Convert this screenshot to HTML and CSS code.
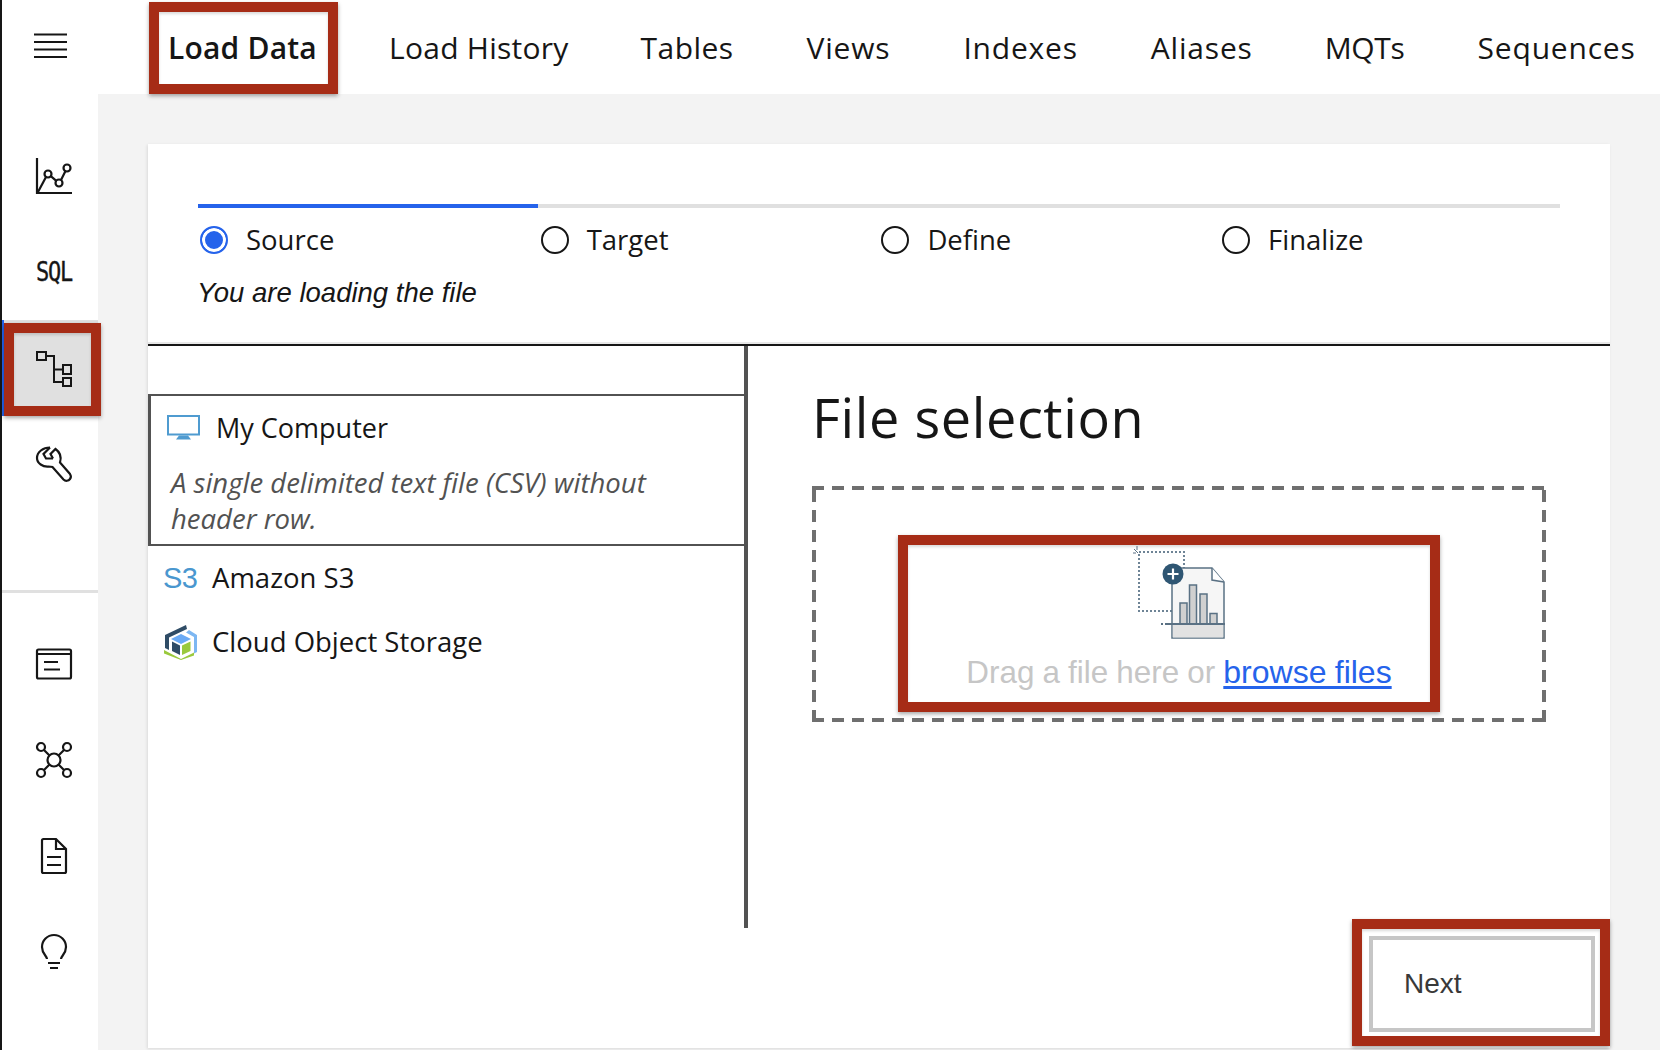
FILE: index.html
```html
<!DOCTYPE html>
<html lang="en">
<head>
<meta charset="utf-8">
<title>Load Data</title>
<link rel="stylesheet" href="styles.css">
</head>
<body>
<nav class="rail">
  <div class="rail-item rail-menu">
    <svg class="ico" viewBox="0 0 36 36"><path d="M0 6.500H33M0 14H33M0 21.500H33M0 29H33"/></svg>
  </div>
  <div class="rail-group rail-top">
    <div class="rail-item">
      <svg class="ico ico-heavy" viewBox="0 0 36 36"><path d="M1 0V35H36"/><circle cx="12" cy="16" r="3.500"/><circle cx="23" cy="25" r="3.500"/><circle cx="31" cy="10" r="3.500"/><path d="M2 34L10 19M14.800 18.200L20.300 22.800M25 22L29.500 13"/></svg>
    </div>
    <div class="rail-item"><span class="sql">SQL</span></div>
    <div class="rail-item active">
      <div class="annot annot-rail">
        <svg class="ico" viewBox="0 0 36 36"><rect x="1" y="1" width="9" height="8"/><rect x="27" y="14" width="8" height="9"/><rect x="27" y="27" width="8" height="8"/><path d="M10 5H18V31H27M18 18.500H27"/></svg>
      </div>
    </div>
    <div class="rail-item">
      <svg class="ico ico-heavy" viewBox="0 0 36 36"><path d="M14 1.500C7 1.500 1 6 1 12C1 17.500 7 21 12.500 20.500L16.500 21L27.500 33.500C29.500 35.500 32.500 35 34 33C35.500 31 35 29.500 34 28L24 16.500C25.500 11.500 24.500 6.500 19.500 3L14.500 8L17 12.500"/><path d="M14 1.500L7.500 8L10 12.500L17 12.500"/></svg>
    </div>
  </div>
  <div class="rail-group rail-bottom">
    <div class="rail-item">
      <svg class="ico ico-heavy" viewBox="0 0 36 36"><rect x="1" y="3.500" width="34" height="29" rx="1.500"/><path d="M1 8H35M8 16H22M8 23.500H24"/></svg>
    </div>
    <div class="rail-item">
      <svg class="ico ico-heavy" viewBox="0 0 36 36"><circle cx="18" cy="18" r="6.500"/><circle cx="5" cy="5" r="4"/><circle cx="31" cy="5" r="4"/><circle cx="5" cy="31" r="4"/><circle cx="31" cy="31" r="4"/><path d="M8 8L13.500 13.500M28 8L22.500 13.500M8 28L13.500 22.500M28 28L22.500 22.500"/></svg>
    </div>
    <div class="rail-item">
      <svg class="ico ico-heavy" viewBox="0 0 36 36"><path d="M7.500 1H20L30 11V33.500A1.500 1.500 0 0 1 28.500 35H7.500A1.500 1.500 0 0 1 6 33.500V2.500A1.500 1.500 0 0 1 7.500 1ZM20 1V11H30M11 19H25M11 27H25"/></svg>
    </div>
    <div class="rail-item">
      <svg class="ico ico-heavy" viewBox="0 0 36 36"><path d="M11 25C11 22 6 20 6 13A12 12 0 0 1 30 13C30 20 25 22 25 25M12 29H24M14 34H22"/></svg>
    </div>
  </div>
</nav>
<div class="main">
  <header class="tabs">
    <div class="annot annot-tab"><span class="tab tab-on">Load Data</span></div>
    <span class="tab tab-snug">Load History</span>
    <span class="tab">Tables</span>
    <span class="tab tab-wide">Views</span>
    <span class="tab tab-wide">Indexes</span>
    <span class="tab tab-wide">Aliases</span>
    <span class="tab tab-tight">MQTs</span>
    <span class="tab tab-wide">Sequences</span>
  </header>
  <section class="card">
    <div class="steps">
      <div class="track"><div class="track-fill"></div></div>
      <div class="step-row">
        <div class="step"><span class="radio radio-on"></span><span>Source</span></div>
        <div class="step"><span class="radio"></span><span>Target</span></div>
        <div class="step"><span class="radio"></span><span>Define</span></div>
        <div class="step"><span class="radio"></span><span>Finalize</span></div>
      </div>
      <p class="step-note">You are loading the file</p>
    </div>
    <div class="body">
      <aside class="sources">
        <div class="source source-on">
          <div class="source-head">
            <svg class="src-monitor" viewBox="0 0 33 25"><rect x="1" y="1" width="31" height="18.500" fill="#fff" stroke="#4f9bd0" stroke-width="2"/><path d="M12 20.500H21L24 24.500H9Z" fill="#4f9bd0"/></svg>
            <span>My Computer</span>
          </div>
          <p class="source-desc">A single delimited text file (CSV) without header row.</p>
        </div>
        <div class="source-row">
          <span class="s3">S3</span>
          <span>Amazon S3</span>
        </div>
        <div class="source-row source-row-cos">
          <svg class="src-cube" viewBox="0 0 36 36"><path d="M23 1L2 11V24L6 26V13.500L24 5Z" fill="#2f4c66"/><path d="M26 6L34 11V28L31 29.500V13L23 8.500Z" fill="#7db7f2"/><path d="M18 10L28 15L18 20L8 15Z" fill="#6aaaf5"/><path d="M9 17.500L17 21.500V31L9 27Z" fill="#2f4c66"/><path d="M19 21.500L27.500 17.500V27L19 31Z" fill="#9ac93c"/><path d="M1 26L18 35L31 28.500V31.500L18 36L1 29.500Z" fill="#9ac93c"/></svg>
          <span>Cloud Object Storage</span>
        </div>
      </aside>
      <div class="pane">
        <h1 class="pane-title">File selection</h1>
        <div class="drop">
          <div class="annot annot-drop">
            <svg class="upload" viewBox="1130 545 100 95">
              <path d="M1134 549L1138 553M1133 553H1136M1137 546V550" fill="none" stroke="#5a7184" stroke-width="1"/>
              <rect x="1139" y="552" width="45" height="59" fill="none" stroke="#6e8496" stroke-width="2" stroke-dasharray="2 2"/>
              <path d="M1172 568H1212L1224 582V638H1172Z" fill="#f6f6f6" stroke="#5a7184" stroke-width="1.500"/>
              <path d="M1212 568V580L1224 582" fill="#fff" stroke="#5a7184" stroke-width="1.500"/>
              <rect x="1172.800" y="624" width="50.500" height="13.500" fill="#e2e2e2"/>
              <rect x="1180" y="603" width="7" height="21" fill="#d0d0d0" stroke="#5a7184" stroke-width="1.500"/>
              <rect x="1189.500" y="585" width="7" height="39" fill="#d0d0d0" stroke="#5a7184" stroke-width="1.500"/>
              <rect x="1200" y="594" width="7" height="30" fill="#d0d0d0" stroke="#5a7184" stroke-width="1.500"/>
              <rect x="1210" y="613.500" width="7" height="10.500" fill="#d0d0d0" stroke="#5a7184" stroke-width="1.500"/>
              <path d="M1161 624H1227" stroke="#5a7184" stroke-width="2" stroke-dasharray="2 2 60 2"/>
              <circle cx="1173" cy="574" r="10.500" fill="#2f5673"/>
              <path d="M1173 568.500V579.500M1167.500 574H1178.500" stroke="#fff" stroke-width="2.200"/>
            </svg>
            <div class="drop-text">Drag a file here or <a class="browse" href="#">browse files</a></div>
          </div>
        </div>
      </div>
    </div>
    <div class="foot">
      <div class="annot annot-next"><div class="next">Next</div></div>
    </div>
  </section>
</div>
</body>
</html>
```
FILE: styles.css
```css
* { box-sizing: border-box; }
html, body { margin: 0; height: 1050px; overflow: hidden; }
body {
  display: flex;
  width: 1660px;
  background: #f3f3f3;
  color: #161616;
  font-family: "Open Sans", "Liberation Sans", sans-serif;
}
.annot { border: 10px solid #a62c16; box-shadow: 0 2px 4px rgba(0,0,0,.35), inset 0 2px 3px rgba(0,0,0,.15); }
.rail {
  width: 98px; flex: none; height: 1050px;
  background: #fff;
  border-left: 2px solid #161616;
  display: flex; flex-direction: column;
  position: relative;
  z-index: 1;
}
.rail-top { margin-top: 34px; }
.rail-bottom { margin-top: 78px; border-top: 3px solid #e0e0e0; padding-top: 23px; }
.rail-item { height: 96px; display: flex; align-items: center; justify-content: center; padding-left: 8px; padding-right: 0; }
.rail-menu.rail-item { height: 94px; padding: 0 0 2px 4px; }
.ico { width: 36px; height: 36px; fill: none; stroke: #161616; stroke-width: 2; overflow: visible; }
.ico-heavy { stroke-width: 2.200; }
.sql {
  font-family: "DejaVu Sans Mono", monospace;
  font-size: 22px; line-height: 36px;
  letter-spacing: -1.200px;
  color: #161616;
  padding-top: 2px;
  transform: scaleY(1.180);
  -webkit-text-stroke: .3px #161616;
}
.rail-item.active {
  background: #e0e0e0;
  border-left: 2px solid #2563eb;
  padding: 3px 0 0 0;
  width: 96px;
  justify-content: flex-start;
  align-items: stretch;
}
.annot-rail {
  width: 97px; height: 93px;
  background: #e0e0e0;
  display: flex; align-items: center; justify-content: center;
  padding: 0 0 2px 3px;
  flex: none;
}
.main { flex: 1; min-width: 0; display: flex; flex-direction: column; }
.tabs {
  height: 94px; background: #fff;
  display: flex; align-items: stretch; justify-content: flex-start;
  padding-left: 51px;
}
.tab {
  font-size: 30px; line-height: 96px;
  white-space: nowrap;
  margin-left: 72px;
  letter-spacing: .45px;
}
.tab-snug { letter-spacing: .25px; margin-left: 73px; }
.tab-wide { letter-spacing: .8px; margin-left: 73px; }
.tab-tight { letter-spacing: -.3px; }
.annot-tab {
  margin-top: 2px;
  height: 92px; width: 189px;
  margin-right: -22px;
  display: flex; align-items: center;
  background: #fff;
}
.annot-tab .tab { margin-left: 9px; font-weight: 600; line-height: 74px; letter-spacing: .2px; }
.card {
  width: 1462px; height: 904px; margin: 50px 0 0 50px;
  background: #fff;
  box-shadow: -1px 1px 3px rgba(0,0,0,.1);
  display: flex; flex-direction: column;
}
.steps { height: 202px; padding: 60px 50px 0; border-bottom: 2px solid #161616; box-shadow: 0 -2px 0 #e8e8e8 inset; }
.track { height: 4px; background: #e0e0e0; }
.track-fill { height: 4px; width: 340px; background: #2563eb; }
.step-row { display: grid; grid-template-columns: repeat(4, 340.700px); margin-top: 16px; }
.step { display: flex; align-items: center; gap: 18px; font-size: 27.500px; line-height: 32px; padding-left: 2px; }
.radio { width: 28px; height: 28px; border-radius: 50%; border: 2px solid #161616; flex: none; margin-bottom: 1px; }
.radio-on { border-color: #2563eb; background: #2563eb; box-shadow: inset 0 0 0 3px #fff; }
.step-note {
  margin: 21px 0 0 -1px;
  font-family: "Liberation Sans", sans-serif;
  font-style: italic; font-size: 27.500px; line-height: 32px;
}
.body { height: 582px; display: flex; }
.sources { width: 600px; padding-top: 48px; border-right: 4px solid #525252; flex: none; }
.source-on { height: 152px; border: solid #525252; border-width: 2px 0 2px 3px; padding: 19px 0 0 16px; }
.source-head { display: flex; align-items: center; gap: 16px; font-size: 27px; line-height: 26px; }
.src-monitor { width: 33px; height: 25px; flex: none; margin-top: -1px; }
.source-desc {
  margin: 24px 0 0 4px;
  width: 530px;
  font-style: italic; font-size: 27.500px; line-height: 36px; color: #525252;
}
.source-row { display: flex; align-items: center; gap: 15px; font-size: 27.500px; line-height: 36px; padding-left: 15px; margin-top: 14px; height: 36px; }
.source-row-cos { margin-top: 28px; }
.s3 { font-family: "Liberation Sans", sans-serif; font-size: 29px; color: #4a97cf; width: 34px; letter-spacing: -.5px; }
.src-cube { width: 36px; height: 36px; flex: none; margin-right: -2px; }
.pane { flex: 1; padding: 36px 0 0 64px; }
.pane-title { margin: 0; font-size: 54px; line-height: 70px; font-weight: 400; letter-spacing: .6px; }
.drop {
  margin-top: 34px;
  width: 734px; height: 236px;
  display: flex; justify-content: center; align-items: flex-end;
  padding: 0 20px 10px 0;
  background:
    repeating-linear-gradient(90deg, #6f6f6f 0 12px, transparent 12px 20px) top left / 100% 4px no-repeat,
    repeating-linear-gradient(90deg, #6f6f6f 0 12px, transparent 12px 20px) bottom left / 100% 4px no-repeat,
    repeating-linear-gradient(0deg, #6f6f6f 0 12px, transparent 12px 20px) top left / 4px 100% no-repeat,
    repeating-linear-gradient(0deg, #6f6f6f 0 12px, transparent 12px 20px) top right / 4px 100% no-repeat;
}
.annot-drop {
  width: 542px; height: 177px;
  background: #fff;
  display: flex; flex-direction: column; align-items: center;
}
.upload { width: 100px; height: 95px; display: block; margin-left: 22px; flex: none; }
.drop-text {
  font-family: "Liberation Sans", sans-serif;
  font-size: 31.400px; line-height: 40px; color: #c6c6c6;
  margin: 12px 0 0 20px; white-space: nowrap;
  word-spacing: -.6px;
}
.browse { color: #2563eb; font-size: 32px; text-decoration: underline; text-underline-offset: 3px; }
.foot { flex: 1; display: flex; justify-content: flex-end; align-items: flex-start; }
.annot-next {
  margin-top: -9px;
  width: 258px; height: 127px;
  padding: 7px 5px 4px 7px;
  background: #fff;
  flex: none;
}
.next {
  height: 100%;
  border: 4px solid #c6c6c6;
  font-family: "Liberation Sans", sans-serif;
  font-size: 28px; line-height: 88px;
  color: #393939;
  padding-left: 31px;
}
```
